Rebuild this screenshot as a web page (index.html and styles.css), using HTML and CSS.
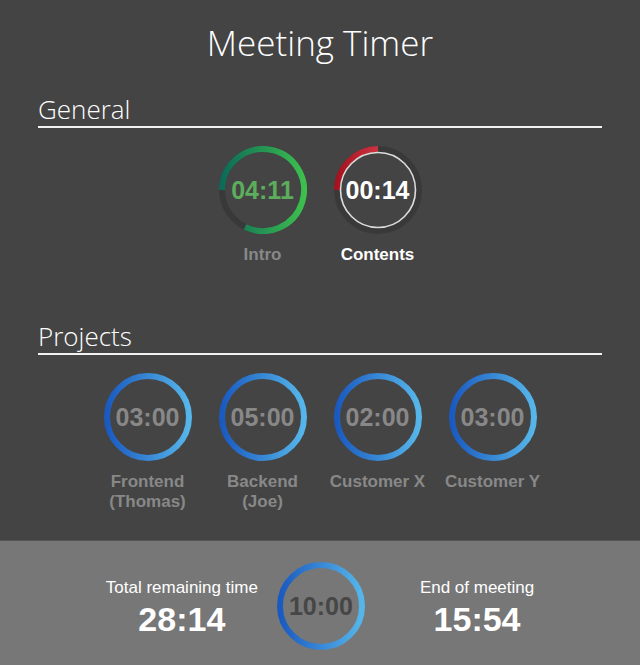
FILE: index.html
```html
<!DOCTYPE html>
<html lang="en">
<head>
<meta charset="utf-8">
<title>Meeting Timer</title>
<link rel="stylesheet" href="styles.css">
</head>
<body>
<svg class="defs" width="0" height="0" aria-hidden="true">
  <defs>
    <linearGradient id="g-blue" x1="0" y1="0" x2="1" y2="0">
      <stop offset="0" stop-color="#1a5ac0"/>
      <stop offset="1" stop-color="#56b6ea"/>
    </linearGradient>
    <linearGradient id="g-green" gradientUnits="userSpaceOnUse" x1="3" y1="0" x2="85" y2="0">
      <stop offset="0" stop-color="#0d6a58"/>
      <stop offset="1" stop-color="#3dbf4e"/>
    </linearGradient>
    <linearGradient id="g-red" x1="0" y1="0" x2="1" y2="0">
      <stop offset="0" stop-color="#a6121f"/>
      <stop offset="1" stop-color="#cc3442"/>
    </linearGradient>
  </defs>
</svg>
<main class="main">
  <h1 class="title">Meeting Timer</h1>

  <section class="section">
    <h2 class="section-title">General</h2>
    <div class="timers">
      <div class="timer timer-done">
        <div class="ring">
          <svg viewBox="0 0 88 88" width="88" height="88">
            <circle class="track" cx="44" cy="44" r="41"/>
            <path class="arc arc-green" d="M3 44 A41 41 0 1 1 26 80.85"/>
          </svg>
          <span class="time time-green">04:11</span>
        </div>
        <div class="label">Intro</div>
      </div>
      <div class="timer timer-active">
        <div class="ring">
          <svg viewBox="0 0 88 88" width="88" height="88">
            <circle class="track" cx="44" cy="44" r="41"/>
            <path class="arc arc-red" d="M3 44 A41 41 0 0 1 44 3"/>
            <circle class="inner" cx="44" cy="44" r="37.5"/>
          </svg>
          <span class="time time-white">00:14</span>
        </div>
        <div class="label label-white">Contents</div>
      </div>
    </div>
  </section>

  <section class="section section-projects">
    <h2 class="section-title">Projects</h2>
    <div class="timers">
      <div class="timer">
        <div class="ring">
          <svg viewBox="0 0 88 88" width="88" height="88"><circle class="full" cx="44" cy="44" r="41"/></svg>
          <span class="time">03:00</span>
        </div>
        <div class="label">Frontend (Thomas)</div>
      </div>
      <div class="timer">
        <div class="ring">
          <svg viewBox="0 0 88 88" width="88" height="88"><circle class="full" cx="44" cy="44" r="41"/></svg>
          <span class="time">05:00</span>
        </div>
        <div class="label">Backend (Joe)</div>
      </div>
      <div class="timer">
        <div class="ring">
          <svg viewBox="0 0 88 88" width="88" height="88"><circle class="full" cx="44" cy="44" r="41"/></svg>
          <span class="time">02:00</span>
        </div>
        <div class="label">Customer X</div>
      </div>
      <div class="timer">
        <div class="ring">
          <svg viewBox="0 0 88 88" width="88" height="88"><circle class="full" cx="44" cy="44" r="41"/></svg>
          <span class="time">03:00</span>
        </div>
        <div class="label">Customer Y</div>
      </div>
    </div>
  </section>
</main>

<footer class="footer">
  <div class="stat stat-left">
    <div class="stat-label">Total remaining time</div>
    <div class="stat-value">28:14</div>
  </div>
  <div class="ring">
    <svg viewBox="0 0 88 88" width="88" height="88"><circle class="full" cx="44" cy="44" r="41"/></svg>
    <span class="time time-dark">10:00</span>
  </div>
  <div class="stat stat-right">
    <div class="stat-label">End of meeting</div>
    <div class="stat-value">15:54</div>
  </div>
</footer>
</body>
</html>
```
FILE: styles.css
```css
* { box-sizing: border-box; }

html, body {
  margin: 0;
  padding: 0;
}

body {
  background: #444444;
  color: #ffffff;
  font-family: "Liberation Sans", Arial, sans-serif;
  min-height: 100vh;
  display: flex;
  flex-direction: column;
}

.defs {
  position: absolute;
  width: 0;
  height: 0;
}

.main {
  flex: 1;
}

.title {
  margin: 19px 0 0;
  font-family: "Open Sans", sans-serif;
  font-weight: 300;
  font-size: 35px;
  line-height: 48px;
  text-align: center;
  color: #ffffff;
}

.section {
  width: 564px;
  margin: 26px auto 0;
}

.section-projects {
  margin-top: 55px;
}

.section-title {
  margin: 0;
  padding-bottom: 1px;
  font-family: "Open Sans", sans-serif;
  font-weight: 300;
  font-size: 26px;
  line-height: 32px;
  color: #ffffff;
  border-bottom: 2px solid #f2f2f2;
}

.timers {
  display: flex;
  justify-content: center;
  gap: 10px;
  margin-top: 18px;
}

.timer {
  width: 105px;
  display: flex;
  flex-direction: column;
  align-items: center;
}

.ring {
  position: relative;
  width: 88px;
  height: 88px;
  flex: none;
}

.ring svg {
  display: block;
}

.track {
  fill: none;
  stroke: #393939;
  stroke-width: 6;
}

.arc {
  fill: none;
  stroke-width: 6;
}

.arc-green { stroke: url(#g-green); }
.arc-red { stroke: url(#g-red); }

.full {
  fill: none;
  stroke: url(#g-blue);
  stroke-width: 6;
}

.inner {
  fill: none;
  stroke: #dcdcdc;
  stroke-width: 1.6;
}

.time {
  position: absolute;
  inset: 0;
  display: flex;
  align-items: center;
  justify-content: center;
  font-weight: 700;
  font-size: 25px;
  color: #888888;
}

.time-green { color: #5cad5c; }
.time-white { color: #ffffff; }
.time-dark { color: #464646; }

.label {
  margin-top: 11px;
  font-weight: 700;
  font-size: 17px;
  line-height: 20px;
  text-align: center;
  color: #888888;
}

.label-white { color: #ffffff; }

.footer {
  height: 125px;
  background: #777777;
  border-top: 1px solid #555555;
  display: flex;
  justify-content: center;
  align-items: flex-start;
  padding-top: 21px;
}

.stat {
  text-align: center;
  padding-top: 16px;
}

.stat-left { margin-right: 19px; }
.stat-right { margin-left: 55px; }

.stat-label {
  font-size: 17px;
  line-height: 20px;
}

.stat-value {
  margin-top: 2px;
  font-weight: 700;
  font-size: 34px;
  line-height: 39px;
}
```
